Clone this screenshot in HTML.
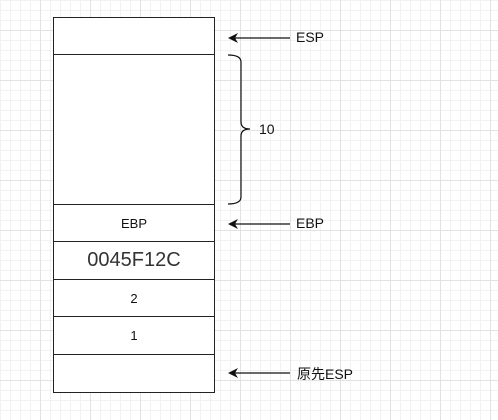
<!DOCTYPE html><html><head><style>
body{margin:0;width:498px;height:420px;overflow:hidden;background:#fff;
background-image:linear-gradient(#e2e2e2 1px,transparent 1px),linear-gradient(90deg,#e2e2e2 1px,transparent 1px),linear-gradient(#f2f2f2 1px,transparent 1px),linear-gradient(90deg,#f2f2f2 1px,transparent 1px);
background-size:50px 50px,50px 50px,10px 10px,10px 10px;background-position:0 30px,40px 0,0 0,0 0;
font-family:"Liberation Sans","Noto Sans CJK SC",sans-serif;position:relative}
.c{position:absolute;left:53px;width:162px;background:#fff;border:1.5px solid #222;box-sizing:border-box;display:flex;align-items:center;justify-content:center;font-size:13px;color:#111}
.l{position:absolute;font-size:14px;color:#111}
</style></head><body>
<div class="c" style="top:17px;height:39px"></div>
<div class="c" style="top:54px;height:152px"></div>
<div class="c" style="top:204px;height:39px">EBP</div>
<div class="c" style="top:241px;height:39px;font-size:20px;color:#333">0045F12C</div>
<div class="c" style="top:279px;height:39px">2</div>
<div class="c" style="top:316px;height:39px">1</div>
<div class="c" style="top:354px;height:39px"></div>
<svg width="498" height="420" style="position:absolute;left:0;top:0">
<g stroke="#111" stroke-width="1.2" fill="none">
<line x1="290" y1="38" x2="234" y2="38"/><line x1="290" y1="224" x2="234" y2="224"/><line x1="290" y1="373" x2="234" y2="373"/>
<path d="M228 55 Q241 55 241 62 L241 122 Q241 129 250 129 Q241 129 241 136 L241 197 Q241 204 228 204"/>
</g>
<g fill="#111"><path d="M228 38 L238 33 L235 38 L238 43Z"/><path d="M228 224 L238 219 L235 224 L238 229Z"/><path d="M228 373 L238 368 L235 373 L238 378Z"/></g>
</svg>
<div class="l" style="left:296px;top:29px">ESP</div>
<div class="l" style="left:259px;top:121px">10</div>
<div class="l" style="left:296px;top:215px">EBP</div>
<div class="l" style="left:297px;top:364px">原先ESP</div>
</body></html>
